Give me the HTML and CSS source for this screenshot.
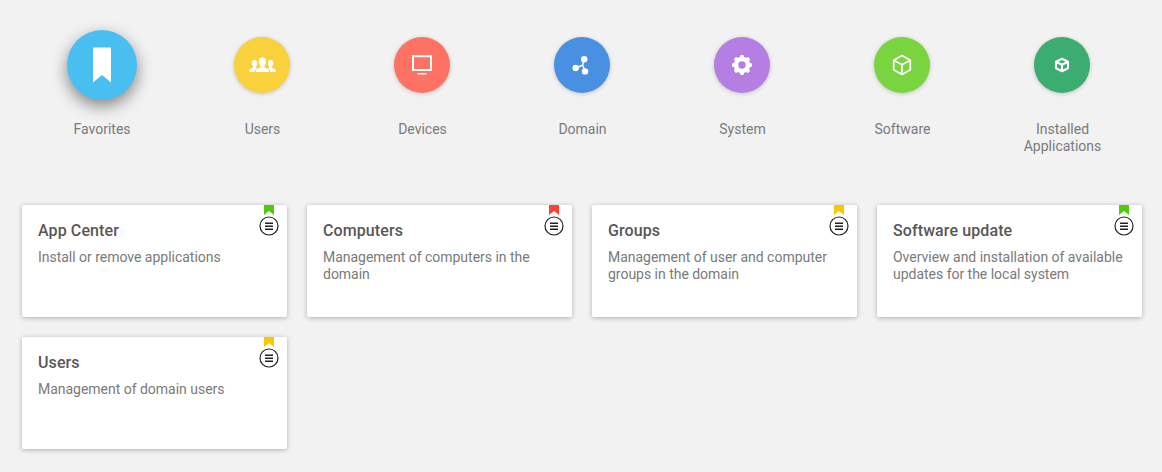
FILE: index.html
```html
<!DOCTYPE html>
<html lang="en">
<head>
<meta charset="utf-8">
<title>Portal</title>
<link rel="stylesheet" href="styles.css">
</head>
<body>
<svg class="defs" width="0" height="0" aria-hidden="true">
  <symbol id="menu" viewBox="0 0 20 20"><circle cx="10" cy="10" r="9" fill="#fff" stroke="#222" stroke-width="1.2"/><path d="M6 7.200h8M6 10.200h8M6 13.200h8" stroke="#222" stroke-width="1.4"/></symbol>
  <symbol id="flag" viewBox="0 0 10 10"><path d="M0 0h10v10L5 6 0 10z" fill="currentColor"/></symbol>
</svg>
<nav class="categories">
  <a class="category active"><span class="disc favorites"><svg viewBox="0 0 70 70"><path d="M26 17.500h18V52.500l-9-7.500-9 7.500z" fill="#fff"/></svg></span><span class="label">Favorites</span></a>
  <a class="category"><span class="disc users"><svg viewBox="0 0 56 56"><g fill="#fff"><ellipse cx="20.500" cy="26.200" rx="2.700" ry="3.200"/><ellipse cx="36.700" cy="26.200" rx="2.700" ry="3.200"/><ellipse cx="28.500" cy="24.600" rx="3.500" ry="4.200"/><path d="M15.200 35v-1.600q0-1.200 1.500-1.700l2.400-.9v-3h3v3l1.200.8q-2.300.8-2.300 2.200V35zM41.800 35v-1.600q0-1.200-1.500-1.700l-2.300-.9v-3h-3v3l-1.200.8q2.300.8 2.300 2.200V35zM22 35v-1.500q0-1.300 1.500-1.800l3-1.200V27h4v3.500l3 1.200q1.500.5 1.500 1.800V35z"/></g></svg></span><span class="label">Users</span></a>
  <a class="category"><span class="disc devices"><svg viewBox="0 0 56 56"><path d="M19 19.200h18v13.900H19z" fill="none" stroke="#fff" stroke-width="2"/><path d="M23.500 36.800h9" stroke="#fff" stroke-width="1.500"/></svg></span><span class="label">Devices</span></a>
  <a class="category"><span class="disc domain"><svg viewBox="0 0 56 56"><g fill="#fff"><circle cx="30.200" cy="22.200" r="3.200"/><circle cx="21.700" cy="31" r="3.200"/><circle cx="31" cy="34.400" r="3.200"/></g><path d="M30.200 22.200l-1.600 5.900-6.900 2.900M28.600 28.100L31 34.400" fill="none" stroke="#fff" stroke-width="1.500"/></svg></span><span class="label">Domain</span></a>
  <a class="category"><span class="disc system"><svg viewBox="0 0 56 56"><circle cx="28" cy="28" r="6" fill="none" stroke="#fff" stroke-width="4.600"/><path id="teeth" d="M25.700 21l.5-2.300q.2-.7.800-.7h2q.6 0 .8.700l.5 2.300M25.700 35l.5 2.300q.2.700.8.700h2q.6 0 .8-.7l.5-2.300" fill="#fff"/><use href="#teeth" transform="rotate(45 28 28)"/><use href="#teeth" transform="rotate(90 28 28)"/><use href="#teeth" transform="rotate(135 28 28)"/></svg></span><span class="label">System</span></a>
  <a class="category"><span class="disc software"><svg viewBox="0 0 56 56"><path d="M28 18.600l8.300 4.600v9.600L28 37.400l-8.300-4.600v-9.600zM19.700 23.200l8.300 4.600 8.300-4.600M28 27.800v9.600" fill="none" stroke="#fff" stroke-width="1.700" stroke-linejoin="round"/></svg></span><span class="label">Software</span></a>
  <a class="category"><span class="disc installed"><svg viewBox="0 0 56 56"><path d="M28 21.700l6 3v6.600l-6 3-6-3v-6.600zM22 24.700l6 3 6-3M28 27.700v6.600" fill="none" stroke="#fff" stroke-width="2.100" stroke-linejoin="round"/></svg></span><span class="label">Installed Applications</span></a>
</nav>
<main class="tiles">
  <article class="tile green"><h2>App Center</h2><p>Install or remove applications</p><svg class="flag"><use href="#flag"/></svg><svg class="menu"><use href="#menu"/></svg></article>
  <article class="tile red"><h2>Computers</h2><p>Management of computers in the domain</p><svg class="flag"><use href="#flag"/></svg><svg class="menu"><use href="#menu"/></svg></article>
  <article class="tile yellow"><h2>Groups</h2><p>Management of user and computer groups in the domain</p><svg class="flag"><use href="#flag"/></svg><svg class="menu"><use href="#menu"/></svg></article>
  <article class="tile green"><h2>Software update</h2><p>Overview and installation of available updates for the local system</p><svg class="flag"><use href="#flag"/></svg><svg class="menu"><use href="#menu"/></svg></article>
  <article class="tile yellow"><h2>Users</h2><p>Management of domain users</p><svg class="flag"><use href="#flag"/></svg><svg class="menu"><use href="#menu"/></svg></article>
</main>
</body>
</html>
```
FILE: styles.css
```css
* { box-sizing: border-box; }
body { margin: 0; min-height: 472px; background: #f2f2f2; font: 14px/17px Roboto, sans-serif; color: #7a7a7a; }
.defs { position: absolute; }
.categories { display: flex; height: 205px; padding: 30px 20px 0 22px; }
.category { width: 160px; display: flex; flex-direction: column; align-items: center; }
.disc { width: 56px; height: 56px; margin: 7px 0; border-radius: 50%; box-shadow: 0 1px 4px rgba(0,0,0,.2); }
.disc svg { display: block; width: 100%; height: 100%; }
.active .disc { width: 70px; height: 70px; margin: 0; box-shadow: 0 6px 16px rgba(0,0,0,.46); }
.label { width: 90px; margin-top: 21px; padding-left: 1px; text-align: center; }
.active .label { padding-left: 0; }
.favorites { background: #49bff1; }
.users { background: #f8d13c; }
.devices { background: #fd7262; }
.domain { background: #4a90e2; }
.system { background: #b57ee2; }
.software { background: #79d43f; }
.installed { background: #3bad70; }
.tiles { display: grid; grid-template-columns: repeat(4, 265px); grid-auto-rows: 112px; gap: 20px; padding-left: 22px; }
.tile { position: relative; padding: 17px 16px 16px; background: #fff; border-radius: 2px; box-shadow: 0 1px 5px rgba(0,0,0,.28); }
.tile h2 { margin: 0 0 9px; font: 500 16px/18px Roboto, sans-serif; letter-spacing: .1px; color: #575757; }
.tile p { margin: 0; letter-spacing: -.02px; }
.flag { position: absolute; top: 0; right: 13px; width: 10px; height: 10px; }
.menu { position: absolute; top: 11px; right: 8px; width: 20px; height: 20px; }
.green { --mark: #4fc90b; }
.red { --mark: #fc4235; }
.yellow { --mark: #fac800; }
.flag { color: var(--mark); }
```
